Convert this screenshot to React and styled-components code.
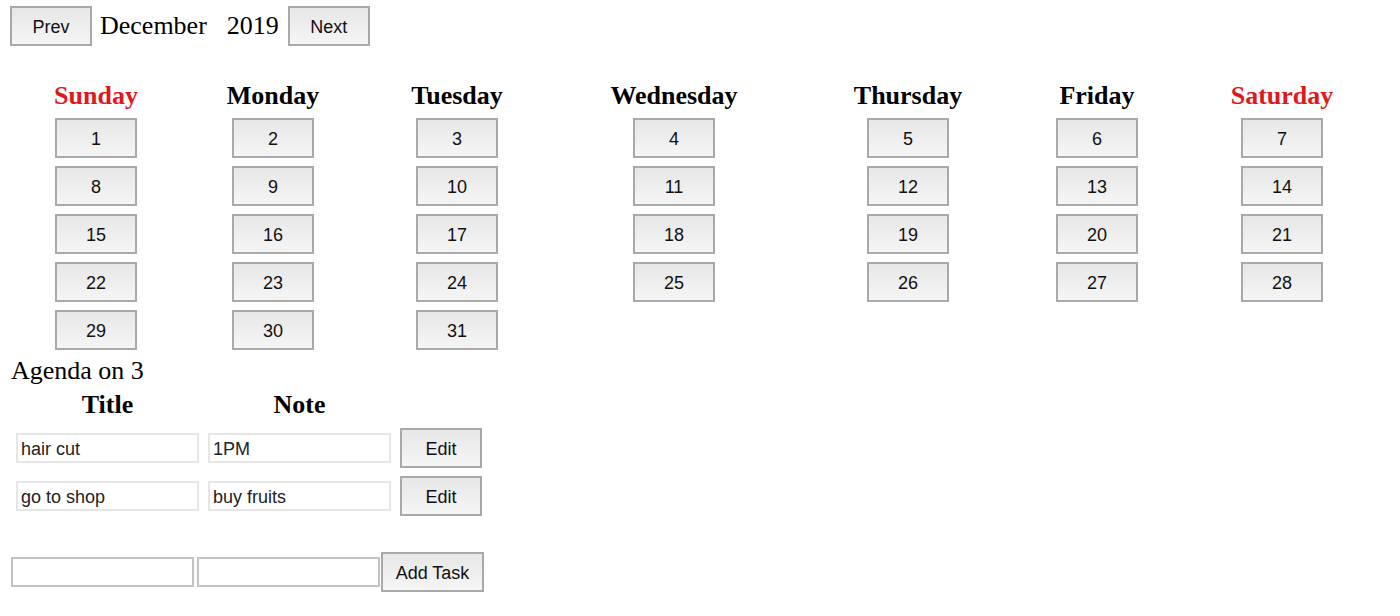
import React, { useState } from "react"
import styled, { createGlobalStyle } from "styled-components"

const GlobalStyle = createGlobalStyle`
  body {
    margin: 0;
    background: #fff;
    font-family: "Liberation Serif", "Times New Roman", serif;
    color: #000;
  }
`

const DAYS = ["Sunday", "Monday", "Tuesday", "Wednesday", "Thursday", "Friday", "Saturday"]
const COLS = "172px 182px 186px 248px 220px 158px 212px"

const Page = styled.div`
  padding: 6px 10px 0 10px;
`

const Button = styled.button`
  box-sizing: border-box;
  width: ${p => p.$w || 82}px;
  height: 40px;
  padding: 2px 0 0 0;
  border: 2px solid #a9a9a9;
  border-radius: 0;
  background: linear-gradient(#e7e7e7, #f5f5f5);
  font-family: "Liberation Sans", Arial, sans-serif;
  font-size: 18px;
  color: #111;
  cursor: pointer;
`

const TopBar = styled.div`
  display: flex;
  align-items: center;
  height: 40px;
`

const MonthLabel = styled.span`
  font-size: 26px;
  margin: 0 20px 0 8px;
`

const YearLabel = styled.span`
  font-size: 26px;
  margin-right: 9px;
`

const Calendar = styled.div`
  display: grid;
  grid-template-columns: ${COLS};
  margin-top: 35px;
`

const DayColumn = styled.div`
  display: flex;
  flex-direction: column;
  align-items: center;
  gap: 8px;
`

const DayName = styled.div`
  height: 30px;
  line-height: 30px;
  margin-bottom: -1px;
  font-size: 26px;
  font-weight: bold;
  color: ${p => (p.$weekend ? "#e0181b" : "#000")};
`

const AgendaTitle = styled.div`
  margin-top: 6px;
  font-size: 26px;
  line-height: 30px;
  padding-left: 1px;
`

const AgendaGrid = styled.div`
  display: grid;
  grid-template-columns: 183px 183px 82px;
  column-gap: 9px;
  row-gap: 8px;
  align-items: center;
  padding-left: 6px;
  margin-top: 4px;
`

const ColHead = styled.div`
  font-size: 26px;
  font-weight: bold;
  line-height: 30px;
  text-align: center;
`

const TaskInput = styled.input`
  box-sizing: border-box;
  width: 183px;
  height: 30px;
  border: 2px solid ${p => (p.$dark ? "#c2c2c2" : "#e6e6e6")};
  padding: 2px 3px 0 3px;
  font-family: "Liberation Sans", Arial, sans-serif;
  font-size: 18px;
  color: #222;
  outline: none;
`

const AddRow = styled.div`
  display: flex;
  align-items: center;
  gap: 3px;
  margin-top: 36px;
  padding-left: 1px;
  & > button {
    margin-left: -2px;
  }
`

function buildWeeks() {
  // December 2019 starts on a Sunday
  const cols = DAYS.map(() => [])
  for (let d = 1; d <= 31; d++) cols[(d - 1) % 7].push(d)
  return cols
}

const App = () => {
  const [tasks] = useState([
    { title: "hair cut", note: "1PM" },
    { title: "go to shop", note: "buy fruits" },
  ])
  const cols = buildWeeks()

  return (
    <Page>
      <GlobalStyle />
      <TopBar>
        <Button>Prev</Button>
        <MonthLabel>December</MonthLabel>
        <YearLabel>2019</YearLabel>
        <Button>Next</Button>
      </TopBar>

      <Calendar>
        {DAYS.map((name, i) => (
          <DayColumn key={name}>
            <DayName $weekend={i === 0 || i === 6}>{name}</DayName>
            {cols[i].map(d => (
              <Button key={d}>{d}</Button>
            ))}
          </DayColumn>
        ))}
      </Calendar>

      <AgendaTitle>Agenda on 3</AgendaTitle>
      <AgendaGrid>
        <ColHead>Title</ColHead>
        <ColHead>Note</ColHead>
        <div />
        {tasks.map((t, i) => (
          <React.Fragment key={i}>
            <TaskInput defaultValue={t.title} />
            <TaskInput defaultValue={t.note} />
            <Button>Edit</Button>
          </React.Fragment>
        ))}
      </AgendaGrid>

      <AddRow>
        <TaskInput $dark />
        <TaskInput $dark />
        <Button $w={103}>Add Task</Button>
      </AddRow>
    </Page>
  )
}

export default App
